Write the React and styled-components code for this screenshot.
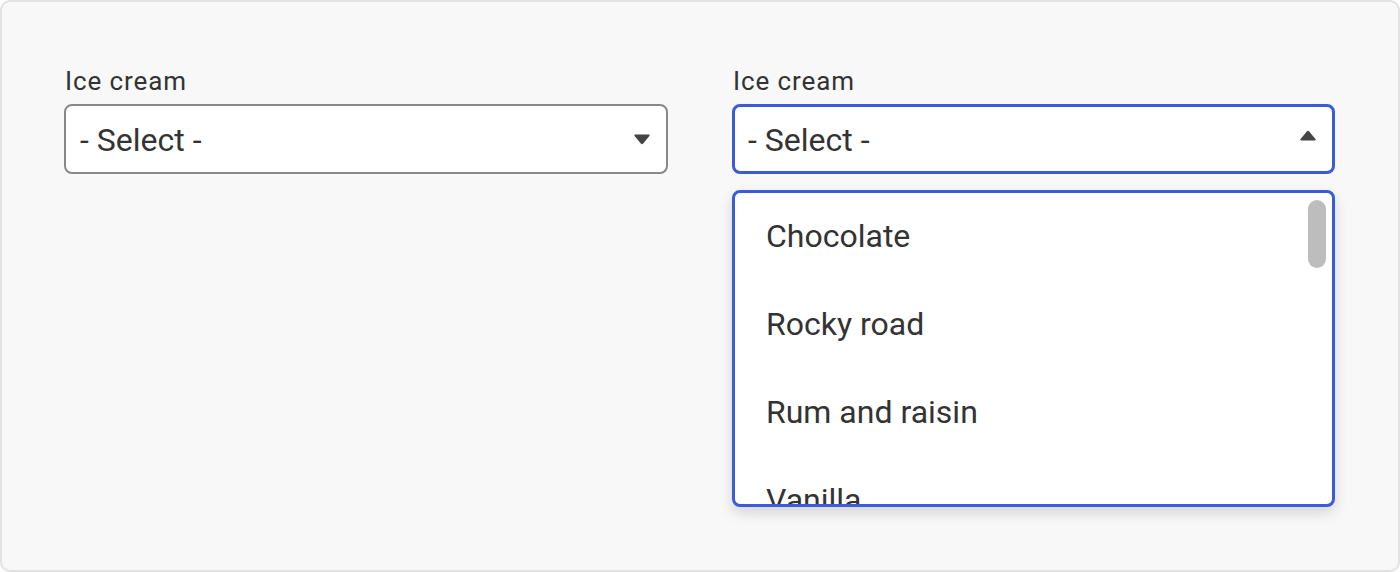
import React from "react";
import styled, { createGlobalStyle } from "styled-components";

const Global = createGlobalStyle`
  html, body {
    margin: 0;
    padding: 0;
    background: #ffffff;
  }
  body {
    font-family: Roboto, "Liberation Sans", Arial, sans-serif;
  }
`;

const Frame = styled.div`
  box-sizing: border-box;
  width: 1400px;
  height: 572px;
  border: 2px solid #e2e2e2;
  border-radius: 10px;
  background: #f8f8f8;
  padding: 62px 63px 0 62px;
  display: grid;
  grid-template-columns: 604px 603px;
  column-gap: 64px;
  align-items: start;
`;

const Field = styled.div`
  display: flex;
  flex-direction: column;
`;

const Label = styled.label`
  font-size: 26px;
  line-height: 34px;
  letter-spacing: 0.9px;
  color: #333333;
  padding-left: 1px;
  margin-bottom: 6px;
`;

const SelectBox = styled.div`
  box-sizing: border-box;
  height: 70px;
  border: ${(p) => (p.$open ? "3px solid #3b5bdb" : "2px solid #888888")};
  border-radius: 8px;
  background: #ffffff;
  display: flex;
  align-items: center;
  justify-content: space-between;
  padding: ${(p) => (p.$open ? "2px 15px 0 13px" : "2px 15px 0 14px")};
  font-size: 32px;
  color: #333333;
`;

const Caret = styled.svg`
  width: 18px;
  height: 12px;
  flex: none;
  transform: ${(p) => (p.$up ? "rotate(180deg)" : "none")};
  margin-top: ${(p) => (p.$up ? "-8px" : "-2px")};
`;

const Listbox = styled.div`
  position: relative;
  box-sizing: border-box;
  margin-top: 16px;
  height: 317px;
  border: 3px solid #3b5bdb;
  border-radius: 8px;
  background: #ffffff;
  box-shadow: 0 6px 14px rgba(0, 0, 0, 0.14);
  overflow: hidden;
`;

const Option = styled.div`
  height: 88px;
  display: flex;
  align-items: center;
  padding-left: 31px;
  padding-bottom: 3px;
  box-sizing: border-box;
  font-size: 32px;
  color: #333333;
`;

const Thumb = styled.div`
  position: absolute;
  top: 7px;
  right: 6px;
  width: 18px;
  height: 68px;
  border-radius: 9px;
  background: #bdbdbd;
`;

const CaretIcon = ({ up }) => (
  <Caret $up={up} viewBox="0 0 18 12">
    <path
      d="M2.2 1.5 H15.8 Q17.4 1.5 16.4 2.9 L10.2 10.6 Q9 12 7.8 10.6 L1.6 2.9 Q0.6 1.5 2.2 1.5 Z"
      fill="#444444"
    />
  </Caret>
);

const flavours = ["Chocolate", "Rocky road", "Rum and raisin", "Vanilla"];

const App = () => {
  return (
    <>
      <Global />
      <Frame>
        <Field>
          <Label>Ice cream</Label>
          <SelectBox>
            <span>- Select -</span>
            <CaretIcon />
          </SelectBox>
        </Field>
        <Field>
          <Label>Ice cream</Label>
          <SelectBox $open>
            <span>- Select -</span>
            <CaretIcon up />
          </SelectBox>
          <Listbox>
            {flavours.map((f) => (
              <Option key={f}>{f}</Option>
            ))}
            <Thumb />
          </Listbox>
        </Field>
      </Frame>
    </>
  );
};

export default App;
